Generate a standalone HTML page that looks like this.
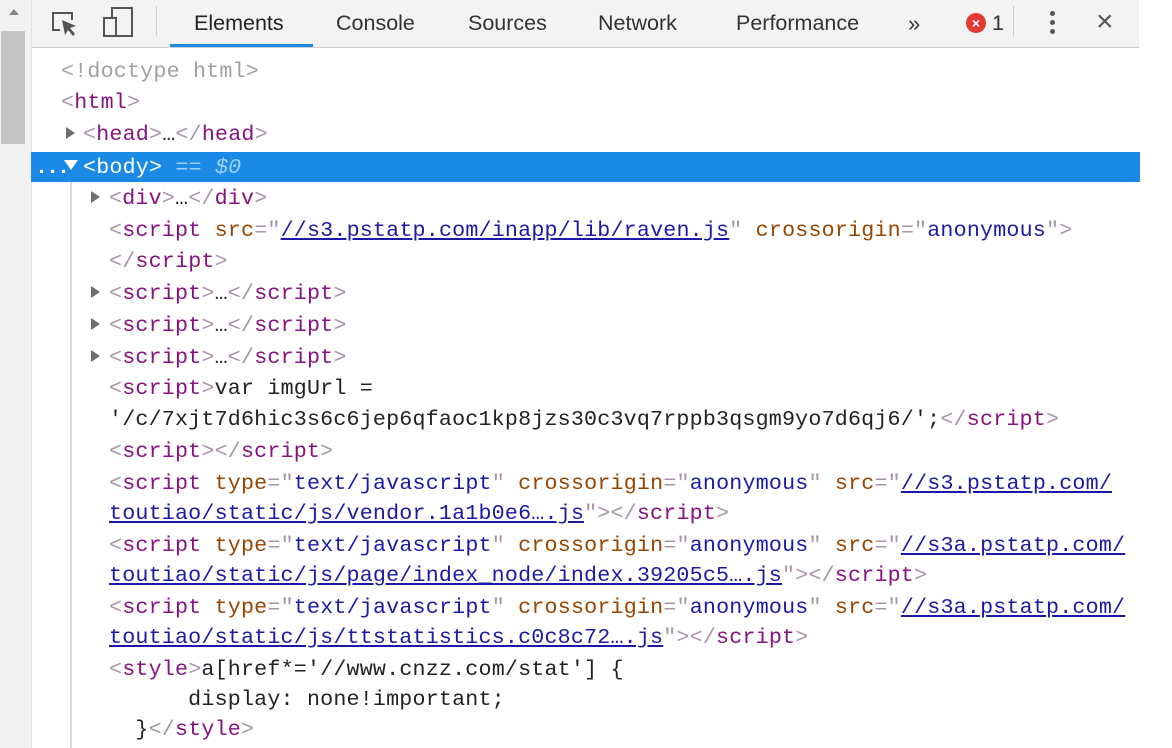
<!DOCTYPE html>
<html><head><meta charset="utf-8"><style>
body{margin:0;width:1172px;height:748px;background:#fff;position:relative;overflow:hidden;font-family:"Liberation Sans",sans-serif}
#sb{position:absolute;left:0;top:0;width:31px;height:748px;background:#f1f1f1;border-right:1px solid #e2e2e2}
#thumb{position:absolute;left:1px;top:31px;width:24px;height:113px;background:#c4c4c4}
#tb{position:absolute;left:32px;top:0;width:1107px;height:47px;background:#f3f3f3;border-bottom:1px solid #cfcfcf}
.tab{position:absolute;top:11px;font-size:21.5px;color:#333}
.l{position:absolute;height:30px;line-height:30px;font-family:"Liberation Mono",monospace;font-size:21.67px;letter-spacing:0.2px;white-space:pre;color:#222}
.t{color:#881280}.b{color:#a894a6}.a{color:#994500}.v{color:#1a1aa6}.u{color:#1a1aa6;text-decoration:underline}.g{color:#a0a0a0}
.tri{position:absolute;width:0;height:0;border-top:6px solid transparent;border-bottom:6px solid transparent;border-left:9px solid #6e6e6e}
</style></head><body>
<div id="sb"><div id="thumb"></div><div style="position:absolute;left:9px;top:9px;border-left:5px solid transparent;border-right:5px solid transparent;border-bottom:6px solid #888"></div></div>
<div id="tb">
<svg style="position:absolute;left:18px;top:10px" width="30" height="28" viewBox="0 0 30 28"><path d="M10 20H3V3h19v7" fill="none" stroke="#555" stroke-width="2"/><path d="M12 10l14 6-6 2 5 6-2 2-5-6-3 5z" fill="#555"/></svg>
<svg style="position:absolute;left:70px;top:6px" width="32" height="32" viewBox="0 0 32 32"><rect x="10" y="2" width="20" height="28" fill="none" stroke="#555" stroke-width="2"/><rect x="2" y="12" width="12" height="18" fill="#f3f3f3" stroke="#555" stroke-width="2"/></svg>
<div style="position:absolute;left:124px;top:6px;width:1px;height:30px;background:#ccc"></div>
<div class="tab" style="left:162px;color:#222">Elements</div>
<div style="position:absolute;left:138px;top:44px;width:143px;height:3px;background:#1a8be0"></div>
<div class="tab" style="left:304px">Console</div>
<div class="tab" style="left:436px">Sources</div>
<div class="tab" style="left:566px">Network</div>
<div class="tab" style="left:704px">Performance</div>
<div class="tab" style="left:876px;font-size:22px">»</div>
<div style="position:absolute;left:934px;top:13px;width:20px;height:20px;border-radius:50%;background:#e53935;color:#fff;font-size:14px;line-height:20px;text-align:center;font-weight:bold">×</div>
<div class="tab" style="left:960px">1</div>
<div style="position:absolute;left:981px;top:6px;width:1px;height:30px;background:#ccc"></div>
<div style="position:absolute;left:1018px;top:11px;width:5px;height:5px;border-radius:50%;background:#555;box-shadow:0 9px 0 #555,0 18px 0 #555"></div>
<div class="tab" style="left:1064px;top:5px;font-size:30px;color:#555">×</div>
</div>
<div style="position:absolute;left:31px;top:152px;width:1109px;height:30px;background:#1a8ae6"></div>
<div style="position:absolute;left:70px;top:182px;width:2px;height:566px;background:#d8d8d8"></div>

<div class="l g" style="left:61px;top:57px">&lt;!doctype html&gt;</div>
<div class="l" style="left:61px;top:88px"><span class="b">&lt;</span><span class="t">html</span><span class="b">&gt;</span></div>
<div class="tri" style="left:66px;top:127px"></div>
<div class="l" style="left:83px;top:120px"><span class="b">&lt;</span><span class="t">head</span><span class="b">&gt;</span>…<span class="b">&lt;/</span><span class="t">head</span><span class="b">&gt;</span></div>
<div class="l" style="left:35px;top:153px;color:#fff;font-weight:bold;letter-spacing:-2px">...</div>
<div style="position:absolute;left:64px;top:160px;border-left:7px solid transparent;border-right:7px solid transparent;border-top:10px solid #fff"></div>
<div class="l" style="left:83px;top:153px;color:#fff">&lt;body&gt; <span style="color:#9fd0f8">== <i>$0</i></span></div>
<div class="tri" style="left:91px;top:191px"></div>
<div class="l" style="left:109px;top:184px"><span class="b">&lt;</span><span class="t">div</span><span class="b">&gt;</span>…<span class="b">&lt;/</span><span class="t">div</span><span class="b">&gt;</span></div>
<div class="l" style="left:109px;top:216px"><span class="b">&lt;</span><span class="t">script</span> <span class="a">src</span><span class="b">="</span><span class="u">//s3.pstatp.com/inapp/lib/raven.js</span><span class="b">"</span> <span class="a">crossorigin</span><span class="b">="</span><span class="v">anonymous</span><span class="b">"&gt;</span></div>
<div class="l" style="left:109px;top:247px"><span class="b">&lt;/</span><span class="t">script</span><span class="b">&gt;</span></div>
<div class="tri" style="left:91px;top:286px"></div>
<div class="l" style="left:109px;top:279px"><span class="b">&lt;</span><span class="t">script</span><span class="b">&gt;</span>…<span class="b">&lt;/</span><span class="t">script</span><span class="b">&gt;</span></div>
<div class="tri" style="left:91px;top:318px"></div>
<div class="l" style="left:109px;top:311px"><span class="b">&lt;</span><span class="t">script</span><span class="b">&gt;</span>…<span class="b">&lt;/</span><span class="t">script</span><span class="b">&gt;</span></div>
<div class="tri" style="left:91px;top:350px"></div>
<div class="l" style="left:109px;top:343px"><span class="b">&lt;</span><span class="t">script</span><span class="b">&gt;</span>…<span class="b">&lt;/</span><span class="t">script</span><span class="b">&gt;</span></div>
<div class="l" style="left:109px;top:374px"><span class="b">&lt;</span><span class="t">script</span><span class="b">&gt;</span>var imgUrl =</div>
<div class="l" style="left:109px;top:405px">'/c/7xjt7d6hic3s6c6jep6qfaoc1kp8jzs30c3vq7rppb3qsgm9yo7d6qj6/';<span class="b">&lt;/</span><span class="t">script</span><span class="b">&gt;</span></div>
<div class="l" style="left:109px;top:437px"><span class="b">&lt;</span><span class="t">script</span><span class="b">&gt;&lt;/</span><span class="t">script</span><span class="b">&gt;</span></div>
<div class="l" style="left:109px;top:469px"><span class="b">&lt;</span><span class="t">script</span> <span class="a">type</span><span class="b">="</span><span class="v">text/javascript</span><span class="b">"</span> <span class="a">crossorigin</span><span class="b">="</span><span class="v">anonymous</span><span class="b">"</span> <span class="a">src</span><span class="b">="</span><span class="u">//s3.pstatp.com/</span></div>
<div class="l" style="left:109px;top:499px"><span class="u">toutiao/static/js/vendor.1a1b0e6….js</span><span class="b">"&gt;&lt;/</span><span class="t">script</span><span class="b">&gt;</span></div>
<div class="l" style="left:109px;top:531px"><span class="b">&lt;</span><span class="t">script</span> <span class="a">type</span><span class="b">="</span><span class="v">text/javascript</span><span class="b">"</span> <span class="a">crossorigin</span><span class="b">="</span><span class="v">anonymous</span><span class="b">"</span> <span class="a">src</span><span class="b">="</span><span class="u">//s3a.pstatp.com/</span></div>
<div class="l" style="left:109px;top:561px"><span class="u">toutiao/static/js/page/index_node/index.39205c5….js</span><span class="b">"&gt;&lt;/</span><span class="t">script</span><span class="b">&gt;</span></div>
<div class="l" style="left:109px;top:593px"><span class="b">&lt;</span><span class="t">script</span> <span class="a">type</span><span class="b">="</span><span class="v">text/javascript</span><span class="b">"</span> <span class="a">crossorigin</span><span class="b">="</span><span class="v">anonymous</span><span class="b">"</span> <span class="a">src</span><span class="b">="</span><span class="u">//s3a.pstatp.com/</span></div>
<div class="l" style="left:109px;top:623px"><span class="u">toutiao/static/js/ttstatistics.c0c8c72….js</span><span class="b">"&gt;&lt;/</span><span class="t">script</span><span class="b">&gt;</span></div>
<div class="l" style="left:109px;top:655px"><span class="b">&lt;</span><span class="t">style</span><span class="b">&gt;</span>a[href*='//www.cnzz.com/stat'] {</div>
<div class="l" style="left:109px;top:685px">      display: none!important;</div>
<div class="l" style="left:109px;top:715px">  }<span class="b">&lt;/</span><span class="t">style</span><span class="b">&gt;</span></div>
</body></html>
